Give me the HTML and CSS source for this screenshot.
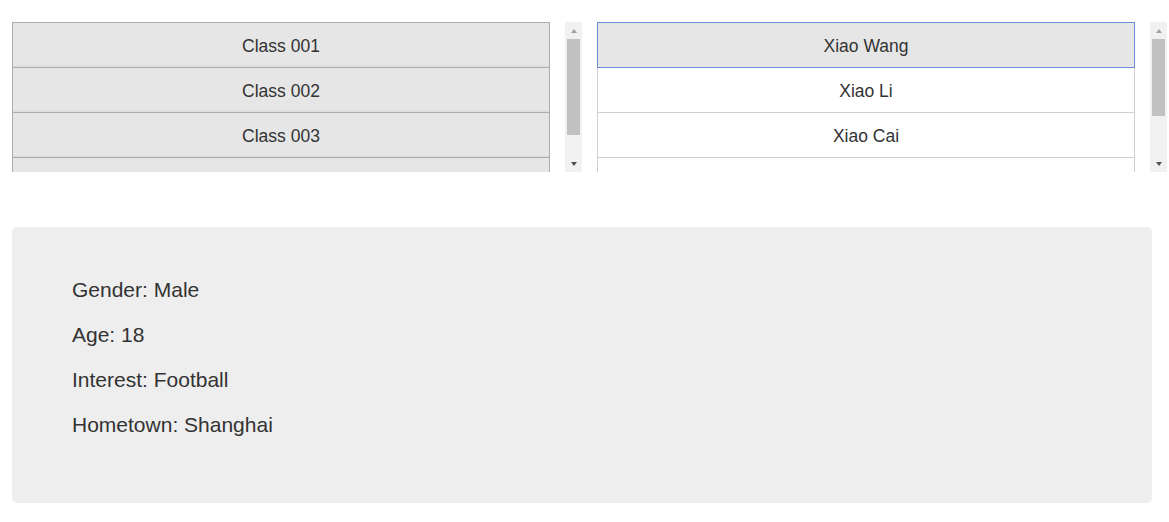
FILE: index.html
```html
<!DOCTYPE html>
<html lang="en">
<head>
  <meta charset="UTF-8">
  <title>Students</title>
  <link rel="stylesheet" href="styles.css">
</head>
<body>

  <div class="pickers">
    <!-- Classes -->
    <div class="pane">
      <div class="list classes">
        <div class="item">Class 001</div>
        <div class="item">Class 002</div>
        <div class="item">Class 003</div>
        <div class="item">Class 004</div>
      </div>
      <div class="scrollbar">
        <div class="arrow up"></div>
        <div class="track"><div class="thumb thumb-classes"></div></div>
        <div class="arrow down"></div>
      </div>
    </div>

    <!-- Students -->
    <div class="pane">
      <div class="list students">
        <div class="item selected">Xiao Wang</div>
        <div class="item">Xiao Li</div>
        <div class="item">Xiao Cai</div>
        <div class="item">Xiao Zhang</div>
        <div class="item">Xiao Liu</div>
      </div>
      <div class="scrollbar">
        <div class="arrow up"></div>
        <div class="track"><div class="thumb thumb-students"></div></div>
        <div class="arrow down"></div>
      </div>
    </div>
  </div>

  <!-- Details -->
  <div class="details">
    <p>Gender: Male</p>
    <p>Age: 18</p>
    <p>Interest: Football</p>
    <p>Hometown: Shanghai</p>
  </div>

</body>
</html>
```

FILE: styles.css
```css
body {
  margin: 0;
  padding: 22px 12px 0;
  font-family: "Liberation Sans", Arial, sans-serif;
  color: #333;
  background: #fff;
}

.pickers {
  display: flex;
  gap: 15px;
  width: 1155px;
}

.pane {
  display: flex;
  gap: 15px;
  width: 570px;
  height: 150px;
}

.list {
  width: 538px;
  height: 150px;
  overflow: hidden;
}

.item {
  box-sizing: border-box;
  height: 46px;
  margin-bottom: -1px;
  padding-top: 1px;
  line-height: 44px;
  text-align: center;
  font-size: 17.5px;
}

.classes .item {
  background-color: #e6e6e6;
  border: 1px solid #adadad;
  box-shadow: inset 0 -2px 2px -1px rgba(0, 0, 0, 0.06);
}

.students .item {
  background-color: #fff;
  border: 1px solid #cfcfcf;
}

.students .item.selected {
  position: relative;
  background-color: #e6e6e6;
  border-color: #6b8fd6;
}

/* fake scrollbar */
.scrollbar {
  width: 17px;
  height: 150px;
  background-color: #f1f1f1;
  display: flex;
  flex-direction: column;
}

.arrow {
  height: 17px;
  display: flex;
  align-items: center;
  justify-content: center;
}

.arrow::before {
  content: "";
  border-left: 3.5px solid transparent;
  border-right: 3.5px solid transparent;
}

.arrow.up::before {
  border-bottom: 4px solid #a3a3a3;
}

.arrow.down::before {
  border-top: 4px solid #505050;
}

.track {
  flex: 1;
  padding: 0 2px;
}

.thumb {
  background-color: #c1c1c1;
}

.thumb-classes {
  height: 96px;
}

.thumb-students {
  height: 77px;
}

.details {
  box-sizing: border-box;
  width: 1140px;
  margin-top: 55px;
  padding: 40px 60px 56px;
  background-color: #eee;
  border-radius: 5px;
  font-size: 21px;
}

.details p {
  margin: 0;
  line-height: 45px;
}
```
